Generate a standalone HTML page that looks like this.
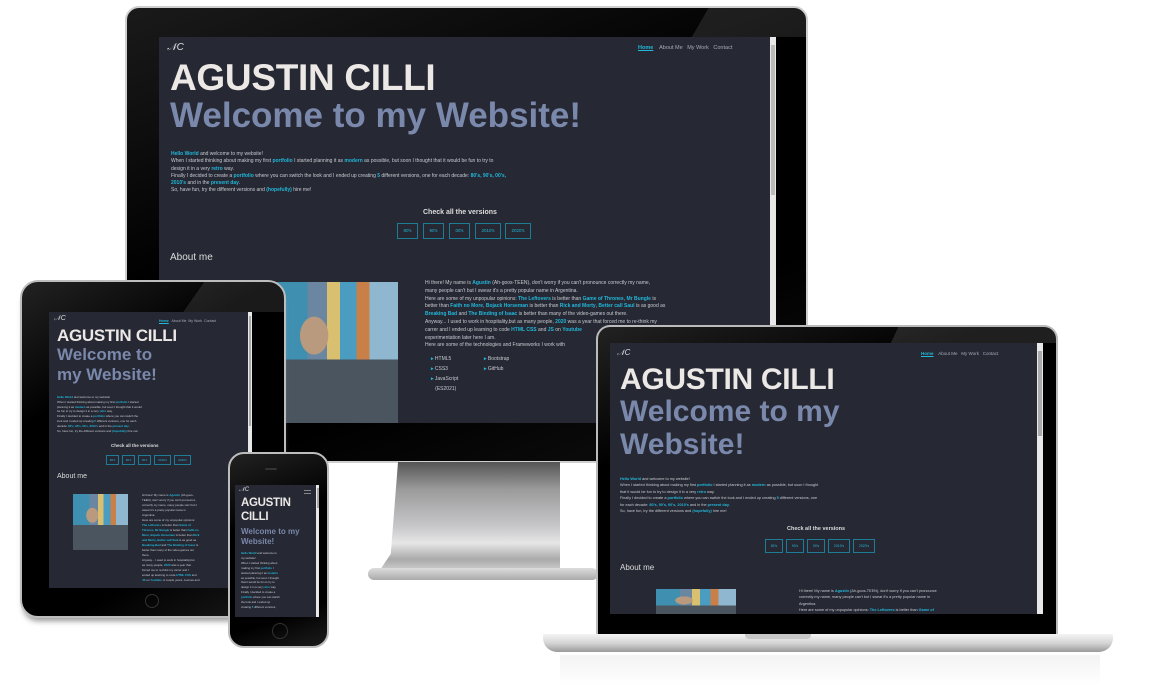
<!DOCTYPE html>
<html><head><meta charset="utf-8"><style>
*{margin:0;padding:0;box-sizing:border-box}
body{width:1157px;height:693px;background:#fff;position:relative;overflow:hidden;font-family:"Liberation Sans",sans-serif}
.a{position:absolute}
.scr{position:absolute;background:#262833;overflow:hidden;color:#c9cbd2}
.scr .a{white-space:nowrap}
.c{color:#22b8da;font-weight:bold}
.h1{color:#ece8e6;font-weight:bold;letter-spacing:-0.3px}
.h2{color:#7a88ab;font-weight:bold}
.btn{position:absolute;border:1px solid #1d7c96;color:#22b8da;text-align:center}
.photo{position:absolute;background:
 radial-gradient(ellipse 18% 22% at 35% 38%,#b99a7e 0 60%,transparent 62%),
 linear-gradient(180deg,transparent 0 55%,#4a5560 55% 100%),
 linear-gradient(90deg,#3f8fb0 0 30%,#6b86a0 30% 45%,#d8c070 45% 55%,#4a9cc0 55% 68%,#c88048 68% 78%,#8fb7cf 78% 100%);}
.nav{color:#aab;}
</style></head><body>

<!-- Monitor -->
<div class="a" style="left:125px;top:6px;width:683px;height:457px;background:linear-gradient(160deg,#1a1a1a,#000 40%,#000 70%,#111);border-radius:14px;border:2px solid #cfcfcf"></div>
<div class="a" style="left:680px;top:8px;width:126px;height:29px;background:linear-gradient(120deg,transparent 0 20%,rgba(255,255,255,0.1) 20%);border-radius:0 12px 0 0"></div>
<!-- stand -->
<div class="a" style="left:380px;top:462px;width:180px;height:108px;background:linear-gradient(180deg,#555 0%,#9a9a9a 25%,#c8c8cb 60%,#e6e6e6 75%,#aaa 90%,#ccc 100%);clip-path:polygon(10% 0,100% 0,100% 100%,0 100%,6% 85%)"></div>
<div class="a" style="left:368px;top:568px;width:230px;height:12px;background:linear-gradient(180deg,#ddd,#aaa);border-radius:8px"></div>

<div class="scr" style="left:159px;top:37px;width:617px;height:386px">
 <div class="a" style="right:0;top:0;width:6px;height:386px;background:#e8e8e8"></div>
 <div class="a" style="right:1px;top:8px;width:4px;height:150px;background:#bbb"></div>
 <div class="a" style="left:8px;top:5px;font-size:10px;color:#ddd;font-style:italic">𝒩C</div>
 <div class="a nav" style="left:479px;top:8px;font-size:5.5px"><span class="c" style="text-decoration:underline">Home</span>&nbsp;&nbsp;&nbsp; About Me &nbsp;&nbsp;My Work &nbsp;&nbsp;Contact</div>
 <div class="a h1" style="left:11px;top:20px;font-size:37px">AGUSTIN CILLI</div>
 <div class="a h2" style="left:11px;top:59px;font-size:35px">Welcome to my Website!</div>
 <div class="a" style="left:12px;top:114px;font-size:5px;line-height:7.3px">
 <span class="c">Hello World</span> and welcome to my website!<br>
 When I started thinking about making my first <span class="c">portfolio</span> I started planning it as <span class="c">modern</span> as possible, but soon I thought that it would be fun to try to<br>
 design it in a very <span class="c">retro</span> way.<br>
 Finally I decided to create a <span class="c">portfolio</span> where you can switch the look and I ended up creating <span class="c">5</span> different versions, one for each decade: <span class="c">80's, 90's, 00's,</span><br>
 <span class="c">2010's</span> and in the <span class="c">present day</span>.<br>
 So, have fun, try the different versions and <span class="c">(hopefully)</span> hire me!</div>
 <div class="a" style="left:264px;top:172px;font-size:7px;font-weight:bold;color:#ddd">Check all the versions</div>
 <div class="btn" style="left:238px;top:186px;width:21px;height:16px;font-size:4.5px;line-height:14px">80's</div>
 <div class="btn" style="left:264px;top:186px;width:21px;height:16px;font-size:4.5px;line-height:14px">90's</div>
 <div class="btn" style="left:290px;top:186px;width:21px;height:16px;font-size:4.5px;line-height:14px">00's</div>
 <div class="btn" style="left:316px;top:186px;width:26px;height:16px;font-size:4.5px;line-height:14px">2010's</div>
 <div class="btn" style="left:346px;top:186px;width:26px;height:16px;font-size:4.5px;line-height:14px">2020's</div>
 <div class="a" style="left:11px;top:215px;font-size:10px;color:#ddd">About me</div>
 <div class="photo" style="left:110px;top:245px;width:129px;height:141px"></div>
 <div class="a" style="left:266px;top:243px;font-size:5px;line-height:7.8px">
 Hi there! My name is <span class="c">Agustin</span> (Ah-goos-TEEN), don't worry if you can't pronounce correctly my name,<br>
 many people can't but I swear it's a pretty popular name in Argentina.<br>
 Here are some of my unpopular opinions: <span class="c">The Leftovers</span> is better than <span class="c">Game of Thrones</span>, <span class="c">Mr Bungle</span> is<br>
 better than <span class="c">Faith no More</span>, <span class="c">Bojack Horseman</span> is better than <span class="c">Rick and Morty</span>, <span class="c">Better call Saul</span> is as good as<br>
 <span class="c">Breaking Bad</span> and <span class="c">The Binding of Isaac</span> is better than many of the video-games out there.<br>
 Anyway... I used to work in hospitality,but as many people, <span class="c">2020</span> was a year that forced me to re-think my<br>
 carrer and I ended up learning to code <span class="c">HTML CSS</span> and <span class="c">JS</span> on <span class="c">Youtube</span><br>
 experimentation later here I am.<br>
 Here are some of the technologies and Frameworks I work with</div>
 <div class="a" style="left:272px;top:317px;font-size:5px;line-height:10px"><span class="c">▸</span> HTML5<br><span class="c">▸</span> CSS3<br><span class="c">▸</span> JavaScript<br>&nbsp;&nbsp;&nbsp;(ES2021)</div>
 <div class="a" style="left:325px;top:317px;font-size:5px;line-height:10px"><span class="c">▸</span> Bootstrap<br><span class="c">▸</span> GitHub</div>
</div>

<!-- Tablet -->
<div class="a" style="left:20px;top:280px;width:266px;height:338px;background:linear-gradient(150deg,#222,#000 30%,#000 75%,#1b1b1b);border-radius:18px;border:2px solid #bdbdbd;box-shadow:0 6px 6px -3px #999"></div>
<div class="a" style="left:150px;top:282px;width:134px;height:30px;background:linear-gradient(125deg,transparent 0 35%,rgba(255,255,255,0.1) 35%);border-radius:0 16px 0 0"></div>
<div class="a" style="left:145px;top:594px;width:14px;height:14px;border-radius:50%;border:1px solid #333"></div>
<div class="scr" style="left:49px;top:312px;width:203px;height:276px">
 <div class="a" style="right:0;top:0;width:4px;height:276px;background:#e8e8e8"></div>
 <div class="a" style="right:1px;top:4px;width:2px;height:110px;background:#aaa"></div>
 <div class="a" style="left:5px;top:3px;font-size:7px;color:#ddd;font-style:italic">𝒩C</div>
 <div class="a nav" style="left:110px;top:7px;font-size:3.5px"><span class="c" style="text-decoration:underline">Home</span>&nbsp;&nbsp; About Me &nbsp;My Work &nbsp;Contact</div>
 <div class="a h1" style="left:8px;top:14px;font-size:17px">AGUSTIN CILLI</div>
 <div class="a h2" style="left:8px;top:33px;font-size:17px;line-height:20px;white-space:normal;width:120px">Welcome to my Website!</div>
 <div class="a" style="left:8px;top:83px;font-size:2.9px;line-height:4.8px">
 <span class="c">Hello World</span> and welcome to my website!<br>When I started thinking about making my first <span class="c">portfolio</span> I started<br>planning it as <span class="c">modern</span> as possible, but soon I thought that it would<br>be fun to try to design it in a very <span class="c">retro</span> way.<br>Finally I decided to create a <span class="c">portfolio</span> where you can switch the<br>look and I ended up creating <span class="c">5</span> different versions, one for each<br>decade: <span class="c">80's, 90's, 00's, 2010's</span> and in the <span class="c">present day</span>.<br>So, have fun, try the different versions and <span class="c">(hopefully)</span> hire me!</div>
 <div class="a" style="left:62px;top:131px;font-size:4.5px;font-weight:bold;color:#ddd">Check all the versions</div>
 <div class="btn" style="left:57px;top:143px;width:13px;height:10px;font-size:3px;line-height:8px">80's</div>
 <div class="btn" style="left:73px;top:143px;width:13px;height:10px;font-size:3px;line-height:8px">90's</div>
 <div class="btn" style="left:89px;top:143px;width:13px;height:10px;font-size:3px;line-height:8px">00's</div>
 <div class="btn" style="left:105px;top:143px;width:17px;height:10px;font-size:3px;line-height:8px">2010's</div>
 <div class="btn" style="left:125px;top:143px;width:17px;height:10px;font-size:3px;line-height:8px">2020's</div>
 <div class="a" style="left:8px;top:161px;font-size:7px;color:#ddd">About me</div>
 <div class="photo" style="left:24px;top:182px;width:55px;height:56px"></div>
 <div class="a" style="left:93px;top:181px;font-size:2.9px;line-height:5px">
 Hi there! My name is <span class="c">Agustin</span> (Ah-goos-<br>TEEN), don't worry if you can't pronounce<br>correctly my name, many people can't but I<br>swear it's a pretty popular name in<br>Argentina.<br>Here are some of my unpopular opinions:<br><span class="c">The Leftovers</span> is better than <span class="c">Game of</span><br><span class="c">Thrones</span>, <span class="c">Mr Bungle</span> is better than <span class="c">Faith no</span><br><span class="c">More</span>, <span class="c">Bojack Horseman</span> is better than <span class="c">Rick</span><br><span class="c">and Morty</span>, <span class="c">Better call Saul</span> is as good as<br><span class="c">Breaking Bad</span> and <span class="c">The Binding of Isaac</span> is<br>better than many of the video-games out<br>there.<br>Anyway... I used to work in hospitality,but<br>as many people, <span class="c">2020</span> was a year that<br>forced me to re-think my carrer and I<br>ended up learning to code <span class="c">HTML CSS</span> and<br><span class="c">JS</span> on <span class="c">Youtube</span>. A couple years, courses and</div>
</div>

<!-- Phone -->
<div class="a" style="left:228px;top:452px;width:101px;height:196px;background:linear-gradient(160deg,#222,#000 35%,#000 80%,#1c1c1c);border-radius:16px;border:2px solid #bdbdbd"></div>
<div class="a" style="left:272px;top:623px;width:16px;height:16px;border-radius:50%;border:1px solid #333"></div>
<div class="a" style="left:265px;top:468px;width:12px;height:2px;background:#333;border-radius:1px"></div>
<div class="scr" style="left:235px;top:485px;width:84px;height:132px">
 <div class="a" style="right:0;top:0;width:3px;height:132px;background:#e8e8e8"></div>
 <div class="a" style="right:0;top:3px;width:2px;height:20px;background:#aaa"></div>
 <div class="a" style="left:4px;top:2px;font-size:6px;color:#ddd;font-style:italic">𝒩C</div>
 <div class="a" style="left:69px;top:5px;width:7px;height:4px;border-top:1px solid #888;border-bottom:1px solid #888"></div>
 <div class="a h1" style="left:6px;top:11px;font-size:11.5px;line-height:14px;white-space:normal;width:70px">AGUSTIN CILLI</div>
 <div class="a h2" style="left:6px;top:42px;font-size:8px;line-height:10px;white-space:normal;width:70px">Welcome to my Website!</div>
 <div class="a" style="left:6px;top:66px;font-size:2.8px;line-height:4.9px">
 <span class="c">Hello World</span> and welcome to<br>my website!<br>When I started thinking about<br>making my first <span class="c">portfolio</span> I<br>started planning it as <span class="c">modern</span><br>as possible, but soon I thought<br>that it would be fun to try to<br>design it in a very <span class="c">retro</span> way.<br>Finally I decided to create a<br><span class="c">portfolio</span> where you can switch<br>the look and I ended up<br>creating <span class="c">5</span> different versions,</div>
</div>

<!-- Laptop -->
<div class="a" style="left:560px;top:655px;width:540px;height:30px;background:linear-gradient(180deg,#f3f3f3,#fff)"></div>
<div class="a" style="left:596px;top:325px;width:462px;height:312px;background:linear-gradient(160deg,#222,#000 30%,#000);border-radius:14px 14px 0 0;border:2px solid #bbb;border-bottom:none"></div>
<div class="a" style="left:880px;top:327px;width:176px;height:16px;background:linear-gradient(115deg,transparent 0 10%,rgba(255,255,255,0.12) 10%);border-radius:0 12px 0 0"></div>
<div class="a" style="left:543px;top:634px;width:570px;height:18px;background:linear-gradient(180deg,#f4f4f4,#d5d5d5 50%,#9a9a9a);border-radius:2px 2px 14px 14px"></div>
<div class="a" style="left:745px;top:634px;width:66px;height:5px;background:#c8c8c8;border-radius:0 0 4px 4px"></div>
<div class="scr" style="left:610px;top:343px;width:433px;height:271px">
 <div class="a" style="right:0;top:0;width:6px;height:271px;background:#e8e8e8"></div>
 <div class="a" style="right:1px;top:8px;width:4px;height:85px;background:#aaa"></div>
 <div class="a" style="left:7px;top:5px;font-size:8px;color:#ddd;font-style:italic">𝒩C</div>
 <div class="a nav" style="left:311px;top:8px;font-size:4.5px"><span class="c" style="text-decoration:underline">Home</span>&nbsp;&nbsp;&nbsp; About Me &nbsp;&nbsp;My Work &nbsp;&nbsp;Contact</div>
 <div class="a h1" style="left:10px;top:20px;font-size:30px">AGUSTIN CILLI</div>
 <div class="a h2" style="left:10px;top:52px;font-size:30px;line-height:33px;white-space:normal;width:260px">Welcome to my Website!</div>
 <div class="a" style="left:10px;top:133px;font-size:3.8px;line-height:6.4px">
 <span class="c">Hello World</span> and welcome to my website!<br>When I started thinking about making my first <span class="c">portfolio</span> I started planning it as <span class="c">modern</span> as possible, but soon I thought<br>that it would be fun to try to design it in a very <span class="c">retro</span> way.<br>Finally I decided to create a <span class="c">portfolio</span> where you can switch the look and I ended up creating <span class="c">5</span> different versions, one<br>for each decade: <span class="c">80's, 90's, 00's, 2010's</span> and in the <span class="c">present day</span>.<br>So, have fun, try the different versions and <span class="c">(hopefully)</span> hire me!</div>
 <div class="a" style="left:177px;top:183px;font-size:5.5px;font-weight:bold;color:#ddd">Check all the versions</div>
 <div class="btn" style="left:155px;top:196px;width:18px;height:14px;font-size:3.5px;line-height:12px">80's</div>
 <div class="btn" style="left:176px;top:196px;width:18px;height:14px;font-size:3.5px;line-height:12px">90's</div>
 <div class="btn" style="left:197px;top:196px;width:18px;height:14px;font-size:3.5px;line-height:12px">00's</div>
 <div class="btn" style="left:218px;top:196px;width:22px;height:14px;font-size:3.5px;line-height:12px">2010's</div>
 <div class="btn" style="left:243px;top:196px;width:22px;height:14px;font-size:3.5px;line-height:12px">2020's</div>
 <div class="a" style="left:10px;top:220px;font-size:8px;color:#ddd">About me</div>
 <div class="photo" style="left:46px;top:246px;width:80px;height:30px"></div>
 <div class="a" style="left:189px;top:245px;font-size:3.8px;line-height:6.3px">
 Hi there! My name is <span class="c">Agustin</span> (Ah-goos-TEEN), don't worry if you can't pronounce<br>correctly my name, many people can't but I swear it's a pretty popular name in<br>Argentina.<br>Here are some of my unpopular opinions: <span class="c">The Leftovers</span> is better than <span class="c">Game of</span></div>
</div>
</body></html>
